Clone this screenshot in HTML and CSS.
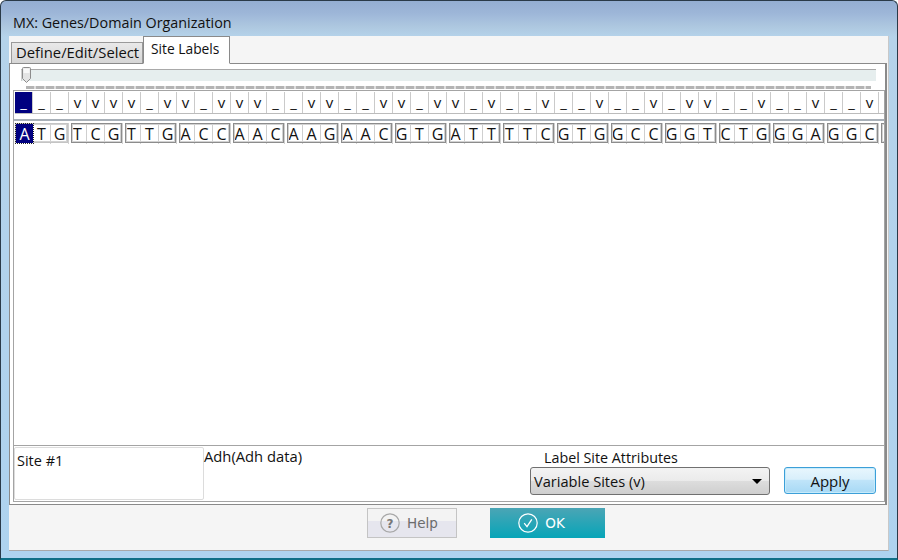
FILE: index.html
```html
<!DOCTYPE html>
<html lang="en">
<head>
    <meta charset="UTF-8">
    <meta name="viewport" content="width=device-width, initial-scale=1.0">
    <title>MX: Genes/Domain Organization</title>
    <link rel="stylesheet" href="styles.css">
</head>
<body>
    <div class="window">
        <div class="titlebar">MX: Genes/Domain Organization</div>
        <div class="client">
            <div class="tabs">
                <div class="tab">Define/Edit/Select</div>
                <div class="tab active">Site Labels</div>
            </div>
            <div class="panel">
                <div class="slider">
                    <div class="track"></div>
                    <div class="ticks"></div>
                    <svg class="thumb" width="11" height="17" viewBox="0 0 11 17">
                        <path d="M1.5 1.5 Q1.5 .5 2.5 .5 H8.5 Q9.5 .5 9.5 1.5 V11.5 L5.5 15.5 L1.5 11.5 Z" fill="#e4e4e4" stroke="#8c8c8c"/>
                        <path d="M2.5 1.5 H8.5 V6 H2.5 Z" fill="#f8f8f8"/>
                    </svg>
                </div>
                <div class="sheet">
                    <div class="grid">
                        <div class="labels" id="labels"></div>
                        <div class="rule"></div>
                        <div class="bases" id="bases"></div>
                    </div>
                    <div class="details">
                        <div class="site">Site #1</div>
                        <div class="seqname">Adh(Adh data)</div>
                        <div class="attrs">
                            <div class="attrs-title">Label Site Attributes</div>
                            <div class="select">
                                <span>Variable Sites (v)</span>
                                <i class="arrow"></i>
                            </div>
                        </div>
                        <button class="apply">Apply</button>
                    </div>
                </div>
            </div>
            <div class="footer">
                <div class="btn help">
                    <svg width="20" height="20" viewBox="0 0 20 20">
                        <circle cx="10" cy="10" r="9.2" fill="none" stroke="#a8a8a8" stroke-width="1.2"/>
                        <text x="10" y="14.5" text-anchor="middle" class="help-mark">?</text>
                    </svg>
                    Help
                </div>
                <div class="btn ok">
                    <svg width="20" height="20" viewBox="0 0 20 20">
                        <circle cx="10" cy="10" r="9.2" fill="none" stroke="#fff" stroke-width="1.2"/>
                        <path d="M6.2 10.2 L9 13.6 L13.8 6.4" fill="none" stroke="#fff" stroke-width="1.3"/>
                    </svg>
                    OK
                </div>
            </div>
        </div>
    </div>

    <script>
        const labels = '___vvvv_vv_vvv__vv__vv_vv_v__v__v__v_vv__v__v__v';
        const codons = ['ATG','TCG','TTG','ACC','AAC','AAG','AAC','GTG','ATT','TTC','GTG','GCC','GGT','CTG','GGA','GGC',' '];

        let labelHtml = '';
        for (let i = 0; i < labels.length; i++) {
            labelHtml += `<span class="cell${i == 0 ? ' selected' : ''}">${labels[i]}</span>`;
        }
        document.getElementById('labels').innerHTML = labelHtml;

        let baseHtml = '';
        codons.forEach((codon, c) => {
            baseHtml += `<span class="codon${c == 0 ? ' first' : ''}">`;
            for (let i = 0; i < codon.length; i++) {
                baseHtml += `<span class="base${c == 0 && i == 0 ? ' selected' : ''}">${codon[i]}</span>`;
            }
            baseHtml += `</span>`;
        });
        document.getElementById('bases').innerHTML = baseHtml;
    </script>
</body>
</html>
```

FILE: styles.css
```css
* {
    box-sizing: border-box;
}
body {
    margin: 0;
    background: #fff;
    font-family: 'Open Sans', 'Noto Sans', sans-serif;
    font-size: 14px;
    color: #111;
}
.window {
    width: 898px;
    height: 560px;
    display: flex;
    flex-direction: column;
    padding: 0 8px 7px 8px;
    border: 1px solid #2a3a48;
    border-bottom: 2px solid #0f6f86;
    border-radius: 6px 6px 0 0;
    background: linear-gradient(180deg, #94aed2 0, #9db6d8 12px, #aec8e0 26px, #b5d3ea 36px, #aed3ef 100%);
}
.titlebar {
    height: 35px;
    padding: 12px 0 0 4px;
    font-size: 14.35px;
    line-height: 19px;
    white-space: nowrap;
}
.client {
    flex: 1;
    display: flex;
    flex-direction: column;
    background: #f5f5f5;
    border-bottom: 1px solid #a8a8a8;
    border-right: 1px solid #c8c8c8;
}
.tabs {
    height: 27px;
    padding-left: 2px;
    display: flex;
    align-items: flex-end;
}
.tab {
    height: 22px;
    width: 132px;
    margin-bottom: -1px;
    padding-left: 4px;
    font-size: 14.8px;
    line-height: 19px;
    white-space: nowrap;
    background: linear-gradient(180deg, #e9e9e9, #d6d6d6);
    border: 1px solid #9a9a9a;
    border-bottom: 1px solid #8a8a8a;
    position: relative;
}
.tab.active {
    height: 28px;
    width: 87px;
    padding-left: 7px;
    font-size: 13.8px;
    line-height: 23px;
    background: #fff;
    border-color: #8a8a8a;
    border-bottom: 1px solid #fff;
    z-index: 1;
}
.panel {
    height: 442px;
    margin-right: 1px;
    padding: 26px 1px 3px 3px;
    background: #fff;
    border: 1px solid #8a8a8a;
    border-right-width: 2px;
    position: relative;
}
.slider {
    position: absolute;
    left: 0;
    right: 0;
    top: 0;
    height: 26px;
}
.track {
    margin: 5px 9px 0 11px;
    height: 12px;
    background: #e6eeee;
    border-top: 1px solid #a9a9a9;
    border-left: 1px solid #d0d0d0;
}
.ticks {
    margin: 5px 14px 0 16px;
    height: 3px;
    background: repeating-linear-gradient(90deg, #b4b4b4 0, #b4b4b4 8px, #dedede 8px, #dedede 10px);
}
.thumb {
    position: absolute;
    left: 11px;
    top: 3px;
}
.sheet {
    height: 412px;
    margin-right: -1px;
    border: 1px solid #a4a4a4;
    display: flex;
    flex-direction: column;
}
.grid {
    height: 355px;
    padding-left: 1px;
    border-bottom: 1px solid #a4a4a4;
    overflow: hidden;
}
.labels {
    display: flex;
    margin-top: 1px;
    height: 22px;
    font-size: 15px;
    border-bottom: 1px solid #bcbcbc;
}
.cell {
    flex: 0 0 18px;
    text-align: center;
    line-height: 21px;
    border-right: 1px solid #cacaca;
}
.cell.selected {
    background: #000080;
    color: #fff;
}
.rule {
    height: 2px;
    margin: 5px 0 2px -1px;
    background: #a8b0b8;
}
.bases {
    display: flex;
    height: 21px;
    font-size: 16px;
}
.codon {
    flex: 0 0 54px;
    display: flex;
    position: relative;
}
/* codon outline sits over the cell lines, 3px gap to the next one */
.codon::after {
    content: "";
    position: absolute;
    left: 2px;
    right: 1px;
    top: 0;
    bottom: 1px;
    border: 1px solid #8c8c8c;
    box-shadow: inset 0 0 0 1px #d2d2d2;
}
.codon.first::after {
    left: 0;
    right: 1px;
    border-color: #c4c4c4;
}
.base {
    flex: 0 0 18px;
    text-align: center;
    line-height: 22px;
    border-right: 1px solid #cfcfcf;
}
.base.selected {
    position: relative;
    z-index: 1;
    margin: 1px 0 1px 1px;
    flex-basis: 17px;
    line-height: 20px;
    background: #000080;
    color: #fff;
    border: 0;
    outline: 1px dotted #222;
}
.details {
    flex: 1;
    display: flex;
    align-items: flex-start;
    padding: 1px 0 0 0;
}
.site {
    width: 190px;
    height: 53px;
    padding: 3px 2px;
    font-size: 14.5px;
    line-height: 19px;
    border: 1px solid #dcdcdc;
    border-radius: 2px;
}
.seqname {
    width: 326px;
    font-size: 14.75px;
    line-height: 19px;
}
.attrs {
    width: 240px;
    margin-top: 1px;
}
.attrs-title {
    padding-left: 14px;
    height: 19px;
    font-size: 14.3px;
    line-height: 19px;
}
.select {
    height: 28px;
    padding: 0 7px 0 3px;
    font-size: 14.6px;
    display: flex;
    justify-content: space-between;
    align-items: center;
    background: linear-gradient(180deg, #f3f3f3 0, #ebebeb 48%, #dddddd 50%, #cfcfcf 100%);
    border: 1px solid #707070;
    border-radius: 3px;
}
.arrow {
    width: 0;
    height: 0;
    border: 5px solid transparent;
    border-top: 5px solid #000;
    border-bottom: 0;
}
.apply {
    width: 92px;
    height: 27px;
    margin: 20px 0 0 14px;
    padding: 0;
    font: inherit;
    font-size: 15px;
    color: #111;
    background: linear-gradient(180deg, #e8f6fd 0, #d8effb 45%, #bfe4f9 50%, #a7d9f5 100%);
    border: 1px solid #3c9fd8;
    border-radius: 3px;
    box-shadow: inset 0 0 0 1px #c6ebfb;
}
.footer {
    flex: 1;
    display: flex;
    align-items: flex-start;
    gap: 33px;
    padding: 3px 0 0 358px;
}
.btn {
    height: 30px;
    display: flex;
    align-items: center;
    justify-content: center;
    gap: 7px;
    font-family: 'DejaVu Sans', sans-serif;
    font-size: 13.5px;
}
.help {
    width: 90px;
    padding-right: 6px;
    color: #6c6c6c;
    background: linear-gradient(180deg, #f3f3f3 0, #f3f3f3 42%, #e6e6ee 43%, #e6e6ee 100%);
    border: 1px solid #c4c4c4;
}
.help-mark {
    font-family: 'DejaVu Sans', sans-serif;
    font-size: 12px;
    font-weight: bold;
    fill: #777;
}
.ok {
    width: 115px;
    padding-right: 12px;
    color: #fff;
    background: linear-gradient(180deg, #4ba5b5, #06a5b8);
}
```
